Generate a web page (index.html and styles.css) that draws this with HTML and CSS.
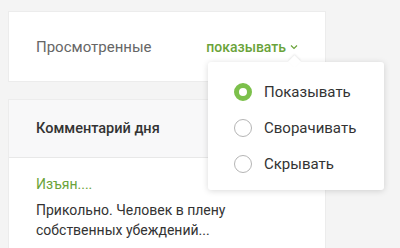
FILE: index.html
```html
<!DOCTYPE html>
<html lang="ru">
<head>
    <meta charset="UTF-8">
    <title>Настройки</title>
    <link rel="stylesheet" href="styles.css">
</head>
<body>
    <div class="page">
        <div class="card setting">
            <span class="setting-label">Просмотренные</span>
            <span class="setting-value">показывать
                <svg class="chevron" width="8" height="6" viewBox="0 0 8 6"><path d="M1 1.5 L4 4.5 L7 1.5" fill="none" stroke="#6aa33a" stroke-width="1.2"/></svg>
            </span>
        </div>

        <div class="dropdown">
            <div class="option">
                <span class="radio checked"></span>
                <span>Показывать</span>
            </div>
            <div class="option">
                <span class="radio"></span>
                <span>Сворачивать</span>
            </div>
            <div class="option">
                <span class="radio"></span>
                <span>Скрывать</span>
            </div>
        </div>

        <div class="card comment">
            <div class="comment-header">Комментарий дня</div>
            <div class="comment-body">
                <div class="comment-title">Изъян....</div>
                <p>Прикольно. Человек в плену собственных убеждений...</p>
            </div>
        </div>
    </div>
</body>
</html>
```

FILE: styles.css
```css
body {
    margin: 0;
    background-color: #f4f4f4;
    font-family: Roboto, "Liberation Sans", sans-serif;
    color: #333333;
}

.page {
    position: relative;
    padding: 11px 8px 0;
    width: 318px;
}

.card {
    background-color: #ffffff;
    border: 1px solid #ececec;
    box-sizing: border-box;
}

.setting {
    height: 71px;
    display: flex;
    align-items: center;
    justify-content: space-between;
    padding: 0 27px 0 27px;
    margin-bottom: 17px;
}

.setting-label {
    font-size: 15px;
    color: #666666;
}

.setting-value {
    font-size: 14px;
    font-weight: 500;
    color: #6aa33a;
    display: flex;
    align-items: center;
    gap: 4px;
}

.dropdown {
    position: absolute;
    left: 208px;
    top: 62px;
    width: 176px;
    height: 128px;
    box-sizing: border-box;
    padding: 12px 0 8px;
    background-color: #ffffff;
    border-radius: 3px;
    box-shadow: 0 1px 6px rgba(0, 0, 0, 0.15);
    z-index: 2;
}

.dropdown::before {
    content: "";
    position: absolute;
    top: -5px;
    left: 82px;
    width: 9px;
    height: 9px;
    background-color: #ffffff;
    transform: rotate(45deg);
    box-shadow: -1px -1px 2px rgba(0, 0, 0, 0.08);
}

.option {
    height: 36px;
    display: flex;
    align-items: center;
    padding-left: 26px;
    gap: 12px;
    font-size: 15px;
    color: #333333;
}

.radio {
    width: 18px;
    height: 18px;
    border: 1px solid #b5b5b5;
    border-radius: 50%;
    box-sizing: border-box;
}

.radio.checked {
    border: 5px solid #7cc04b;
}

.comment {
    height: 160px;
}

.comment-header {
    height: 57px;
    background-color: #f8f8f9;
    border-bottom: 1px solid #e8e8e8;
    display: flex;
    align-items: center;
    padding-left: 27px;
    font-size: 14.5px;
    font-weight: 500;
    color: #333333;
}

.comment-body {
    padding: 18px 27px;
}

.comment-title {
    font-size: 14px;
    color: #6aa33a;
    margin-bottom: 8px;
}

.comment-body p {
    margin: 0;
    font-size: 14px;
    line-height: 20px;
    color: #333333;
}
```
